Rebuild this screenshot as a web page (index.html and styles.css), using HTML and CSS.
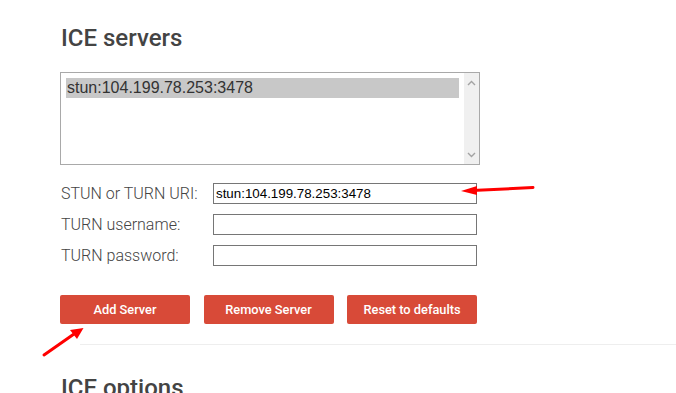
FILE: index.html
```html
<!DOCTYPE html>
<html lang="en">
<head>
  <meta charset="UTF-8" />
  <meta name="viewport" content="width=device-width, initial-scale=1.0"/>
  <title>Trickle ICE</title>
  <link rel="stylesheet" href="styles.css">
</head>
<body>
  <div class="container">
    <section class="servers">
      <h2>ICE servers</h2>

      <div class="listbox">
        <div class="list-items">
          <div class="option selected">stun:104.199.78.253:3478</div>
        </div>
        <div class="scrollbar">
          <svg width="9" height="6" viewBox="0 0 9 6"><path d="M1 5 L4.5 1.5 L8 5" fill="none" stroke="#a3a3a3" stroke-width="1.4"/></svg>
          <svg width="9" height="6" viewBox="0 0 9 6"><path d="M1 1 L4.5 4.5 L8 1" fill="none" stroke="#a3a3a3" stroke-width="1.4"/></svg>
        </div>
      </div>

      <div class="fields">
        <label for="url">STUN or TURN URI:</label>
        <input type="text" id="url" value="stun:104.199.78.253:3478">

        <label for="username">TURN username:</label>
        <input type="text" id="username">

        <label for="password">TURN password:</label>
        <input type="password" id="password">
      </div>

      <div class="buttons">
        <button id="add">Add Server</button>
        <button id="remove">Remove Server</button>
        <button id="reset">Reset to defaults</button>
      </div>
    </section>

    <hr class="divider">

    <section class="options">
      <h2>ICE options</h2>
    </section>
  </div>

  <!-- annotation arrows drawn over the screenshot -->
  <svg class="annotations" width="676" height="393" viewBox="0 0 676 393">
    <line x1="533" y1="187.5" x2="472" y2="190.5" stroke="#f00" stroke-width="3" stroke-linecap="round"/>
    <polygon points="461,191 477,186 477,195" fill="#f00"/>
    <line x1="44" y1="355" x2="74" y2="334" stroke="#f00" stroke-width="3" stroke-linecap="round"/>
    <polygon points="83.5,328 70,330 77,339" fill="#f00"/>
  </svg>
</body>
</html>
```

FILE: styles.css
```css
* {
  box-sizing: border-box;
}

body {
  margin: 0;
  font-family: Roboto, 'Liberation Sans', sans-serif;
  font-weight: 300;
  color: #444;
  background: #fff;
  overflow: hidden;
}

.container {
  padding: 24px 0 0 60px;
}

h2 {
  margin: 0;
  font-size: 24px;
  line-height: 28px;
  font-weight: 500;
  color: #444;
  padding-left: 1px;
}

.listbox {
  margin-top: 20px;
  width: 420px;
  height: 93px;
  border: 1px solid #a9a9a9;
  display: flex;
}

.list-items {
  flex: 1;
  padding: 5px;
}

.option {
  font-family: 'Liberation Sans', Arial, sans-serif;
  font-size: 16px;
  line-height: 20px;
  color: #333;
  padding-left: 1px;
}

.option.selected {
  background: #c8c8c8;
}

.scrollbar {
  width: 15px;
  background: #f0f0f0;
  display: flex;
  flex-direction: column;
  justify-content: space-between;
  align-items: center;
  padding: 7px 0 6px;
}

.fields {
  margin-top: 18px;
  display: grid;
  grid-template-columns: 153px 264px;
  row-gap: 10px;
  align-items: center;
}

label {
  font-size: 16px;
  padding-left: 1px;
}

input {
  height: 21px;
  border: 1px solid #767676;
  border-radius: 0;
  padding: 0 2px;
  font-family: 'Liberation Sans', Arial, sans-serif;
  font-size: 13.33px;
  color: #000;
}

.buttons {
  margin-top: 29px;
  display: flex;
  gap: 13.5px;
}

button {
  width: 130px;
  height: 29px;
  background-color: #d84a38;
  border: none;
  border-radius: 2px;
  color: #fff;
  font-family: Roboto, sans-serif;
  font-size: 12.8px;
  font-weight: 500;
  padding: 0 0 1px;
}

.divider {
  margin: 20px 0 29px 20px;
  border: none;
  border-top: 1px solid #eee;
}

.annotations {
  position: absolute;
  top: 0;
  left: 0;
  pointer-events: none;
}
```
